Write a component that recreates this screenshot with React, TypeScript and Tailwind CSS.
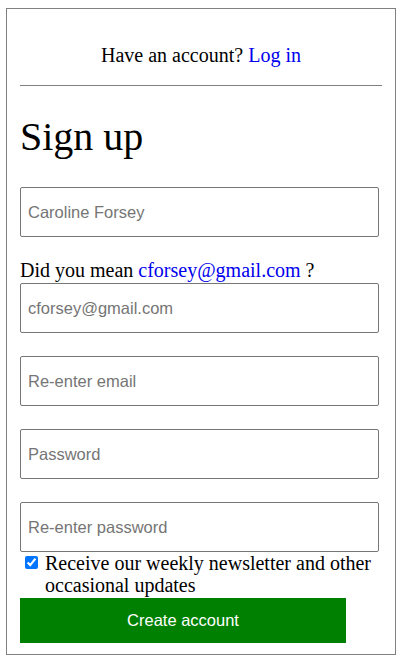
import React from "react";

const fields = [
  { placeholder: "Caroline Forsey", type: "text", gap: "mt-[27px]" },
];

const inputClass =
  "block h-[50px] w-[359px] rounded-[2px] border border-[#767676] bg-white px-[7px] font-['Liberation_Sans',Arial,sans-serif] text-[16.5px] text-black placeholder:text-[#757575] outline-none";

const App: React.FC = () => {
  return (
    <div className="min-h-[669px] bg-white pl-[6px] pt-[8px] font-['Liberation_Serif','Times_New_Roman',serif] text-black">
      <div className="w-[390px] border border-[#808080] px-[13px] pb-[11px] pt-[35px]">
        <p className="text-center text-[20px] leading-[23px]">
          Have an account?{" "}
          <a href="#" className="text-[#0000ee]">
            Log in
          </a>
        </p>
        <hr className="mt-[18px] border-0 border-t border-[#808080]" />

        <h1 className="mt-[28px] text-[40px] leading-[46px] font-normal">Sign up</h1>

        <form className="flex flex-col">
          {fields.map((f) => (
            <input
              key={f.placeholder}
              type={f.type}
              placeholder={f.placeholder}
              className={`${inputClass} ${f.gap}`}
            />
          ))}

          <p className="mt-[22px] text-[20px] leading-[23px]">
            Did you mean{" "}
            <a href="#" className="text-[#0000ee]">
              cforsey@gmail.com
            </a>{" "}
            ?
          </p>
          <input type="email" placeholder="cforsey@gmail.com" className={`${inputClass} mt-px`} />
          <input type="email" placeholder="Re-enter email" className={`${inputClass} mt-[23px]`} />
          <input type="password" placeholder="Password" className={`${inputClass} mt-[23px]`} />
          <input
            type="password"
            placeholder="Re-enter password"
            className={`${inputClass} mt-[23px]`}
          />

          <label className="flex items-start text-[20px] leading-[22px]">
            <input
              type="checkbox"
              defaultChecked
              className="ml-[5px] mt-[4px] h-[13px] w-[13px] shrink-0 accent-[#0075ff]"
            />
            <span className="ml-[7px]">
              Receive our weekly newsletter and other occasional updates
            </span>
          </label>

          <button
            type="button"
            className="mt-[2px] h-[45px] w-[326px] bg-[#008000] font-['Liberation_Sans',Arial,sans-serif] text-[16.5px] text-white"
          >
            Create account
          </button>
        </form>
      </div>
    </div>
  );
};

export default App;
